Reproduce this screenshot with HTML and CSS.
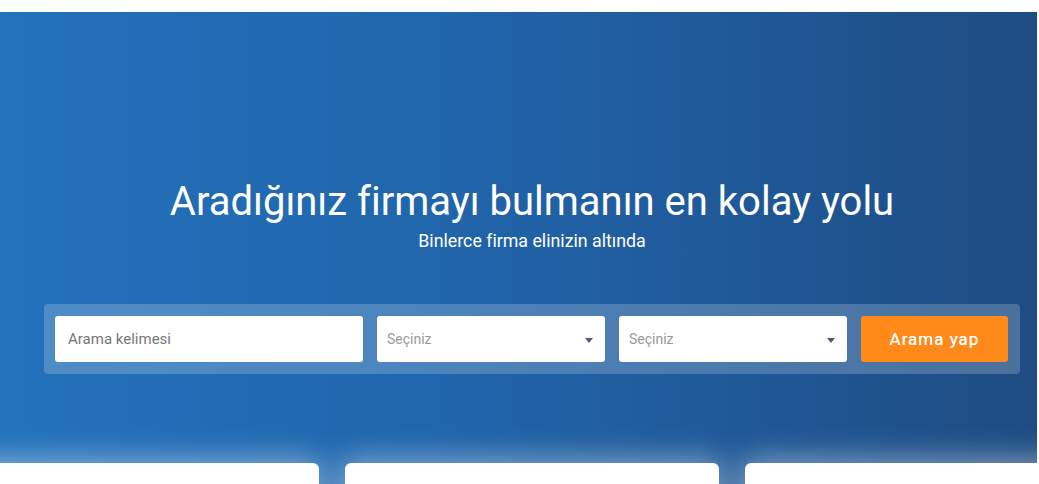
FILE: index.html
```html
<!DOCTYPE html>
<html lang="tr">
<head>
<meta charset="utf-8">
<link rel="stylesheet" href="styles.css">
</head>
<body>
<div class="topbar"></div>
<section class="hero">
  <div class="hero-inner">
    <h1 class="title">Aradığınız firmayı bulmanın en kolay yolu</h1>
    <p class="subtitle">Binlerce firma elinizin altında</p>
    <form class="search">
      <input class="field keyword" type="text" placeholder="Arama kelimesi">
      <div class="field select"><span>Seçiniz</span><i class="caret"></i></div>
      <div class="field select"><span>Seçiniz</span><i class="caret"></i></div>
      <button class="btn" type="button">Arama yap</button>
    </form>
  </div>
  <div class="cards">
    <div class="card"></div>
    <div class="card"></div>
    <div class="card"></div>
  </div>
</section>
</body>
</html>
```
FILE: styles.css
```css
html, body { margin: 0; padding: 0; background: #fff; overflow: hidden; }
body { font-family: Roboto, "Noto Sans", sans-serif; width: 1039px; height: 484px; }
.topbar { height: 12px; background: #fff; }
.hero {
  position: relative;
  width: 1037px;
  height: 472px;
  background: linear-gradient(90deg, #2372bb 0%, #2166ad 40%, #1f5795 75%, #1e4c82 100%);
  overflow: hidden;
}
.hero-inner {
  width: 976px;
  margin-left: 44px;
  padding-top: 164px;
  text-align: center;
  color: #fff;
}
.title {
  margin: 0;
  font-weight: 400;
  font-size: 40px;
  line-height: 52px;
}
.subtitle {
  margin: 1px 0 0;
  font-size: 17.8px;
  line-height: 24px;
}
.search {
  margin-top: 51px;
  display: flex;
  gap: 14px;
  padding: 12px 12px 12px 11px;
  background: rgba(255,255,255,0.2);
  border-radius: 4px;
  text-align: left;
}
.field {
  height: 46px;
  box-sizing: border-box;
  background: #fff;
  border: none;
  border-radius: 3px;
  font-family: inherit;
}
.keyword {
  width: 308px;
  padding: 0 13px;
  font-size: 15px;
  color: #333;
  outline: none;
}
.keyword::placeholder { color: #777; }
.select {
  width: 228px;
  display: flex;
  align-items: center;
  justify-content: space-between;
  padding: 0 12px 0 10px;
  font-size: 14px;
  color: #999;
}
.caret {
  width: 0; height: 0;
  border-left: 4.5px solid transparent;
  border-right: 4.5px solid transparent;
  border-top: 5px solid #585872;
  margin-top: 2px;
}
.btn {
  width: 147px;
  height: 46px;
  border: none;
  border-radius: 3px;
  background: #ff8a19;
  color: #fff;
  font-family: inherit;
  font-size: 17px;
  font-weight: 400;
  letter-spacing: 1px;
  text-shadow: 0 0 0.4px #fff;
}
.cards {
  position: absolute;
  left: -55px;
  top: 451px;
  display: flex;
  gap: 26px;
}
.card {
  flex: 0 0 374px;
  height: 200px;
  background: #fff;
  border-radius: 6px;
  box-shadow: 0 0 30px 4px rgba(255,255,255,0.45);
}
```
